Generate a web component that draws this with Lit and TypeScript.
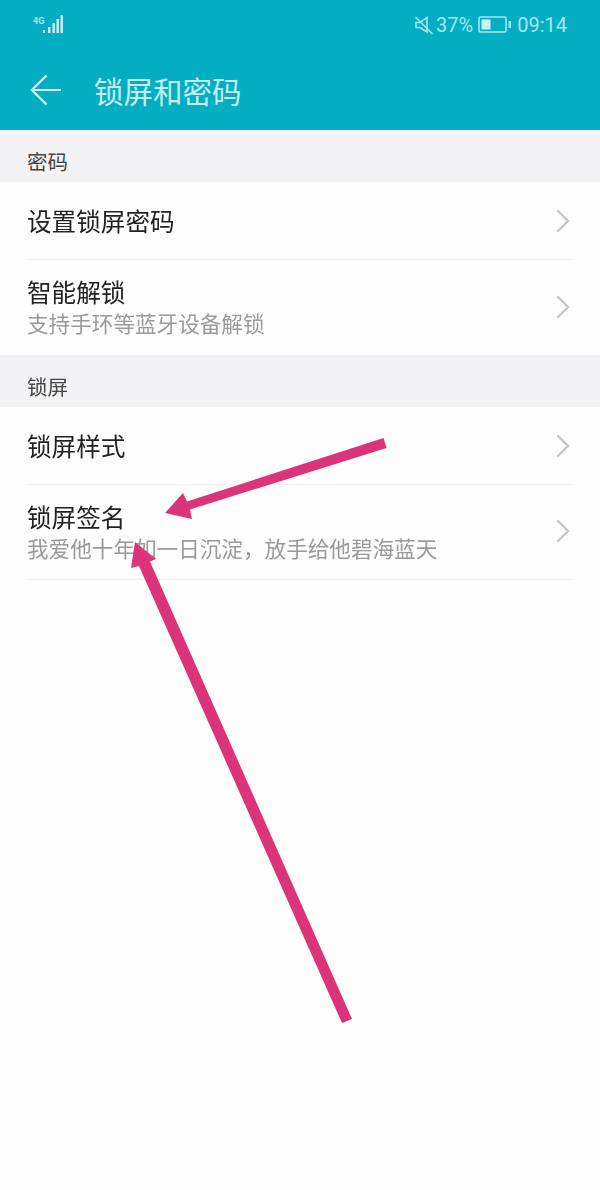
import { LitElement, html, css, svg } from "lit";
import { customElement } from "lit/decorators.js";

const chevron = html`<svg class="chev" width="16" height="26" viewBox="0 0 16 26"><path d="M2.5 2.5 L13 13 L2.5 23.5" fill="none" stroke="#c6c6c6" stroke-width="2.4"/></svg>`;

@customElement("app-root")
export class AppRoot extends LitElement {
  static styles = css`
    :host { display: block; position: relative; width: 600px; height: 1190px; overflow: hidden; background: #fdfdfd;
      font-family: "Noto Sans CJK SC", "Liberation Sans", sans-serif; }
    .page { filter: blur(0.5px); }
    .head { background: #05adc3; height: 130px; box-sizing: border-box; display: flex; flex-direction: column; }
    .status { height: 50px; display: flex; align-items: center; padding: 0 33px 0 32px; justify-content: space-between; }
    .net { display: flex; align-items: flex-end; }
    .right { display: flex; align-items: center; color: #a4e6ee; font: 400 20px/24px Roboto, sans-serif; }
    .pct { margin-left: 2px; margin-right: 5px; }
    .time { margin-left: 5px; }
    .bar { display: flex; align-items: center; padding-left: 30px; height: 80px; margin-top: 1px; }
    .title { margin-left: 32px; font-size: 29.5px; line-height: 40px; color: #c4f0f2; font-weight: 400; }
    .section { height: 52px; box-sizing: border-box; background: #f3f3f5; padding: 10px 0 0 27px; display: flex; align-items: center; font-size: 20.5px; color: #444; }
    .row { margin: 0 27px; display: flex; align-items: center; justify-content: space-between; border-bottom: 1.5px solid #efefef; box-sizing: border-box; }
    .row.last { border-bottom: none; }
    .h78 { height: 78px; }
    .h95 { height: 95px; }
    .h95 .chev { margin-bottom: 2px; }
    .t { font-size: 24.6px; line-height: 30px; color: #222; font-weight: 400; position: relative; top: -1px; }
    .s { font-size: 21.6px; line-height: 30px; color: #9a9a9a; margin-top: 1px; font-weight: 400; }
    .chev { margin-right: 2px; }
    .arrows { position: absolute; left: 0; top: 0; }
  `;

  render() {
    return html`
      <div class="page">
        <div class="head">
          <div class="status">
            <div class="net">
              <svg width="32" height="20" viewBox="0 0 32 20">
                <text x="1" y="9" font-family="Roboto, sans-serif" font-size="9" font-weight="700" fill="#a4e6ee">4G</text>
                <rect x="11" y="15" width="2" height="3" fill="#cdf1f4"/>
                <rect x="16" y="12" width="2.4" height="6" fill="#cdf1f4"/>
                <rect x="20.5" y="8" width="2.4" height="10" fill="#cdf1f4"/>
                <rect x="24.5" y="4" width="2.4" height="14" fill="#cdf1f4"/>
                <rect x="28.5" y="0" width="2.4" height="18" fill="#cdf1f4"/>
              </svg>
            </div>
            <div class="right">
              <svg width="20" height="20" viewBox="0 0 20 20" fill="none" stroke="#a4e6ee" stroke-width="1.6">
                <path d="M2 7.5 H6 L13 2.5 V17 L6 12.5 H2 Z" fill="none"/>
                <path d="M1.5 2 L18.5 19"/>
              </svg>
              <span class="pct">37%</span>
              <svg width="34" height="18" viewBox="0 0 34 18">
                <rect x="1" y="1" width="27" height="15" rx="1.5" fill="none" stroke="#a4e6ee" stroke-width="1.6"/>
                <rect x="3.5" y="3.5" width="9" height="10" fill="#cdf1f4"/>
                <rect x="30.5" y="5" width="2.5" height="7" fill="#a4e6ee"/>
              </svg>
              <span class="time">09:14</span>
            </div>
          </div>
          <div class="bar">
            <svg width="32" height="32" viewBox="0 0 32 32" fill="none" stroke="#d8f5f5" stroke-width="2.2">
              <path d="M16.5 1.5 L1.8 16 L16.5 30.5 M2 16 H31"/>
            </svg>
            <div class="title">锁屏和密码</div>
          </div>
        </div>
        <div class="section">密码</div>
        <div class="row h78"><div class="t">设置锁屏密码</div>${chevron}</div>
        <div class="row h95 last"><div><div class="t">智能解锁</div><div class="s">支持手环等蓝牙设备解锁</div></div>${chevron}</div>
        <div class="section">锁屏</div>
        <div class="row h78"><div class="t">锁屏样式</div>${chevron}</div>
        <div class="row h95"><div><div class="t">锁屏签名</div><div class="s">我爱他十年如一日沉淀，放手给他碧海蓝天</div></div>${chevron}</div>
      </div>
      <svg class="arrows" width="600" height="1190" viewBox="0 0 600 1190">
        ${svg`
          <path d="M383.5 438 L386.5 448 L190 509.5 L192 519 L165 513 L183 493 L187 501.5 Z" fill="#dc3478"/>
          <path d="M352 1019 L342 1023 L139 566 L131 568 L135 542 L156 559 L150 561.5 Z" fill="#dc3478"/>
        `}
      </svg>
    `;
  }
}
